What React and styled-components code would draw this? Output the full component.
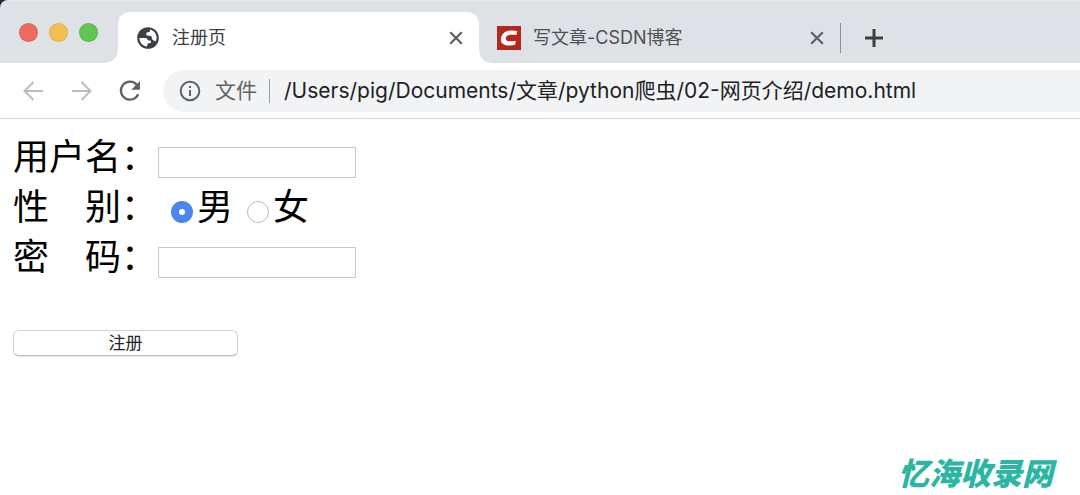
import React, { useState } from "react";
import styled, { createGlobalStyle } from "styled-components";

const GlobalStyle = createGlobalStyle`
  * {
    box-sizing: border-box;
  }
  body {
    margin: 0;
    background-color: #ffffff;
    font-family: Inter, "Noto Sans CJK SC", sans-serif;
  }
  button, input {
    margin: 0;
    padding: 0;
    font-family: inherit;
  }
`;

const Screen = styled.div`
  display: flex;
  flex-direction: column;
  min-height: 100vh;
  overflow-x: hidden;
`;

const CornerBack = styled.div`
  background-color: #22253f;
`;

const TabStrip = styled.div`
  display: flex;
  align-items: flex-end;
  height: 63px;
  background-color: #dee1e6;
  border-top: 1px solid #e6e9ec;
  border-top-left-radius: 8px;
`;

const WindowControls = styled.div`
  display: flex;
  align-self: flex-start;
  gap: 11px;
  width: 118px;
  padding: 22px 0 0 19px;
  flex-shrink: 0;
`;

const WindowButton = styled.button`
  width: 19px;
  height: 19px;
  border: 1px solid rgba(0, 0, 0, 0.08);
  border-radius: 50%;
  background-color: ${(props) => props.$color};
`;

const Tab = styled.div`
  position: relative;
  display: flex;
  align-items: center;
  width: 361px;
  height: 51px;
  padding: 0 13px 0 18px;
  color: ${(props) => (props.$active ? "#3c4043" : "#4d5155")};
  background-color: ${(props) => (props.$active ? "#ffffff" : "transparent")};
  border-radius: 12px 12px 0 0;

  /* 选中标签底部的外圆角 */
  &::before,
  &::after {
    content: "";
    display: ${(props) => (props.$active ? "block" : "none")};
    position: absolute;
    bottom: 0;
    width: 12px;
    height: 12px;
  }
  &::before {
    left: -12px;
    background: radial-gradient(circle at 0 0, transparent 11px, #ffffff 12px);
  }
  &::after {
    right: -12px;
    background: radial-gradient(circle at 100% 0, transparent 11px, #ffffff 12px);
  }
`;

const TabTitle = styled.span`
  flex: 1;
  margin-left: 12px;
  font-size: 18px;
  line-height: 26px;
  white-space: nowrap;
`;

const IconButton = styled.button`
  display: flex;
  align-items: center;
  justify-content: center;
  width: ${(props) => props.$size}px;
  height: ${(props) => props.$size}px;
  border: none;
  background: none;
  color: ${(props) => props.$color || "#5f6368"};
  flex-shrink: 0;
`;

const TabDivider = styled.span`
  width: 1px;
  height: 30px;
  margin: 0 20px 10px 0;
  background-color: #8d9196;
  flex-shrink: 0;
`;

const NewTab = styled.div`
  display: flex;
  align-items: center;
  height: 51px;
`;

const Toolbar = styled.div`
  display: flex;
  align-items: center;
  gap: 20px;
  height: 56px;
  padding-left: 19px;
  border-bottom: 1px solid #d5d7d9;
`;

const AddressBar = styled.div`
  display: flex;
  align-items: center;
  flex: 1;
  height: 42px;
  padding-left: 16px;
  background-color: #f1f3f4;
  border-radius: 21px 0 0 21px;
  color: #5f6368;
`;

const Scheme = styled.span`
  margin-left: 14px;
  padding-right: 12px;
  border-right: 1px solid #9aa0a6;
  font-size: 21px;
  line-height: 24px;
  white-space: nowrap;
`;

const AddressInput = styled.input`
  flex: 1;
  min-width: 0;
  margin-left: 14px;
  border: none;
  outline: none;
  background: none;
  color: #202124;
  font-size: 21px;
  line-height: 30px;
`;

const Page = styled.main`
  display: flex;
  flex: 1;
  flex-direction: column;
  padding: 10px 27px 4px 13px;
`;

const Row = styled.div`
  display: flex;
  align-items: center;
  height: 50px;
  color: #000000;
  font-family: "Noto Sans CJK SC", sans-serif;
  font-size: 36px;
  line-height: 50px;
  white-space: nowrap;
`;

const TextField = styled.input`
  width: 198px;
  height: 31px;
  margin: 16px 0 0 1px;
  padding: 0 4px;
  border: 1px solid #c8c8c8;
  background-color: #ffffff;
  font-size: 20px;
`;

const RadioLabel = styled.label`
  display: flex;
  align-items: center;
  margin-left: 14px;
`;

const Radio = styled.input`
  appearance: none;
  width: 22px;
  height: 22px;
  margin: 16px 4px 0 0;
  border: 1px solid #b9b9b9;
  border-radius: 50%;
  background-color: #ffffff;

  &:checked {
    border: 8px solid #4a86ee;
  }
`;

const SubmitButton = styled.button`
  width: 225px;
  height: 26px;
  margin-top: 51px;
  border: 1px solid #d4d4d4;
  border-bottom-color: #bdbdbd;
  border-radius: 6px;
  background-color: #ffffff;
  box-shadow: 0 1px 1px rgba(0, 0, 0, 0.1);
  color: #222222;
  font-size: 17px;
  line-height: 24px;
`;

const Watermark = styled.div`
  align-self: flex-end;
  margin-top: auto;
  color: #2bb5a3;
  font-family: "Noto Sans CJK SC", sans-serif;
  font-size: 31px;
  font-style: italic;
  font-weight: 900;
  line-height: 38px;
`;

function GlobeIcon() {
  return (
    <svg width="24" height="24" viewBox="0 0 24 24" aria-hidden="true">
      <circle cx="12" cy="12" r="10.8" fill="#3c4043" />
      <path
        d="M3.4 12H9.2C11 12 11.4 13.1 11.9 14.3L14.2 14.6C15.3 14.9 15.3 16.2 14.5 16.9L11.7 17.4 10.9 20.5C6.6 20 3.5 16.6 3.4 12ZM14.1 3.6C18 4.7 20.6 8 20.6 12 20.5 13.2 20.2 14.4 19.6 15.5 18.5 14.2 17.4 14.6 16.4 13.4 15.4 12.2 16.2 10.6 15 9.9L10.9 9.5C9.7 8.8 10 6.8 11.3 6.2L13.7 5.9Z"
        fill="#ffffff"
      />
    </svg>
  );
}

function CsdnIcon() {
  return (
    <svg width="24" height="24" viewBox="0 0 25 25" aria-hidden="true">
      <rect width="25" height="25" fill="#b5261e" />
      <path
        d="M21 5.3 20.3 9.5C17.8 9 14.6 8.8 12.2 9.5 9 10.6 8 14.3 10.8 15.5 12.8 16.3 16.5 16 19.6 15.3L18.9 19.6C14.4 20.8 8.8 20.8 6 18.5 2.5 15.5 3.6 8.9 8.4 6.2 11.8 4.3 17 4.3 21 5.3Z"
        fill="#ffffff"
      />
    </svg>
  );
}

function InfoIcon() {
  return (
    <svg width="22" height="22" viewBox="0 0 22 22" aria-hidden="true">
      <circle cx="11" cy="11" r="9.3" fill="none" stroke="currentColor" strokeWidth="2" />
      <path d="M10 10h2v6h-2zM10 6h2v2h-2z" fill="currentColor" />
    </svg>
  );
}

function StrokeIcon({ size, width, d }) {
  return (
    <svg width={size} height={size} viewBox={`0 0 ${size} ${size}`} aria-hidden="true">
      <path d={d} fill="none" stroke="currentColor" strokeWidth={width} />
    </svg>
  );
}

function ReloadIcon() {
  return (
    <svg width="28" height="28" viewBox="0 0 28 28" aria-hidden="true">
      <path
        d="M22.1 8.2A9 9 0 1 0 23.2 17.2"
        fill="none"
        stroke="currentColor"
        strokeWidth="2.3"
      />
      <path d="M25 4V12.7H16.3Z" fill="currentColor" />
    </svg>
  );
}

function CloseButton() {
  return (
    <IconButton $size={20} aria-label="关闭标签页">
      <StrokeIcon size={20} width={2.3} d="M4.2 4.2 15.8 15.8M15.8 4.2 4.2 15.8" />
    </IconButton>
  );
}

function BrowserHeader() {
  const [url, setUrl] = useState(
    "/Users/pig/Documents/文章/python爬虫/02-网页介绍/demo.html"
  );

  return (
    <header>
      <CornerBack>
        <TabStrip>
          <WindowControls>
            <WindowButton $color="#ed6a5f" aria-label="关闭窗口" />
            <WindowButton $color="#f5bf4f" aria-label="最小化" />
            <WindowButton $color="#61c554" aria-label="最大化" />
          </WindowControls>
          <Tab $active>
            <GlobeIcon />
            <TabTitle>注册页</TabTitle>
            <CloseButton />
          </Tab>
          <Tab>
            <CsdnIcon />
            <TabTitle>写文章-CSDN博客</TabTitle>
            <CloseButton />
          </Tab>
          <TabDivider />
          <NewTab>
            <IconButton $size={26} $color="#3c4043" aria-label="新标签页">
              <StrokeIcon size={26} width={3} d="M13 4V22M4 13H22" />
            </IconButton>
          </NewTab>
        </TabStrip>
      </CornerBack>
      <Toolbar>
        <IconButton $size={28} $color="#babcbe" aria-label="后退">
          <StrokeIcon size={28} width={2} d="M24 14H6M14.5 5 5.5 14 14.5 23" />
        </IconButton>
        <IconButton $size={28} $color="#babcbe" aria-label="前进">
          <StrokeIcon size={28} width={2} d="M5 14H23M14.5 5 23.5 14 14.5 23" />
        </IconButton>
        <IconButton $size={28} aria-label="刷新">
          <ReloadIcon />
        </IconButton>
        <AddressBar>
          <InfoIcon />
          <Scheme>文件</Scheme>
          <AddressInput
            aria-label="地址"
            value={url}
            onChange={(e) => setUrl(e.target.value)}
          />
        </AddressBar>
      </Toolbar>
    </header>
  );
}

function App() {
  const [gender, setGender] = useState("male");

  return (
    <Screen>
      <GlobalStyle />
      <BrowserHeader />
      <Page>
        <form onSubmit={(e) => e.preventDefault()}>
          <Row>
            <label htmlFor="username">用户名：</label>
            <TextField id="username" type="text" />
          </Row>
          <Row role="radiogroup" aria-labelledby="gender">
            <span id="gender">性　别：</span>
            <RadioLabel>
              <Radio
                type="radio"
                name="gender"
                checked={gender === "male"}
                onChange={() => setGender("male")}
              />
              男
            </RadioLabel>
            <RadioLabel>
              <Radio
                type="radio"
                name="gender"
                checked={gender === "female"}
                onChange={() => setGender("female")}
              />
              女
            </RadioLabel>
          </Row>
          <Row>
            <label htmlFor="password">密　码：</label>
            <TextField id="password" type="password" />
          </Row>
          <SubmitButton type="submit">注册</SubmitButton>
        </form>
        <Watermark>忆海收录网</Watermark>
      </Page>
    </Screen>
  );
}

export default App;
